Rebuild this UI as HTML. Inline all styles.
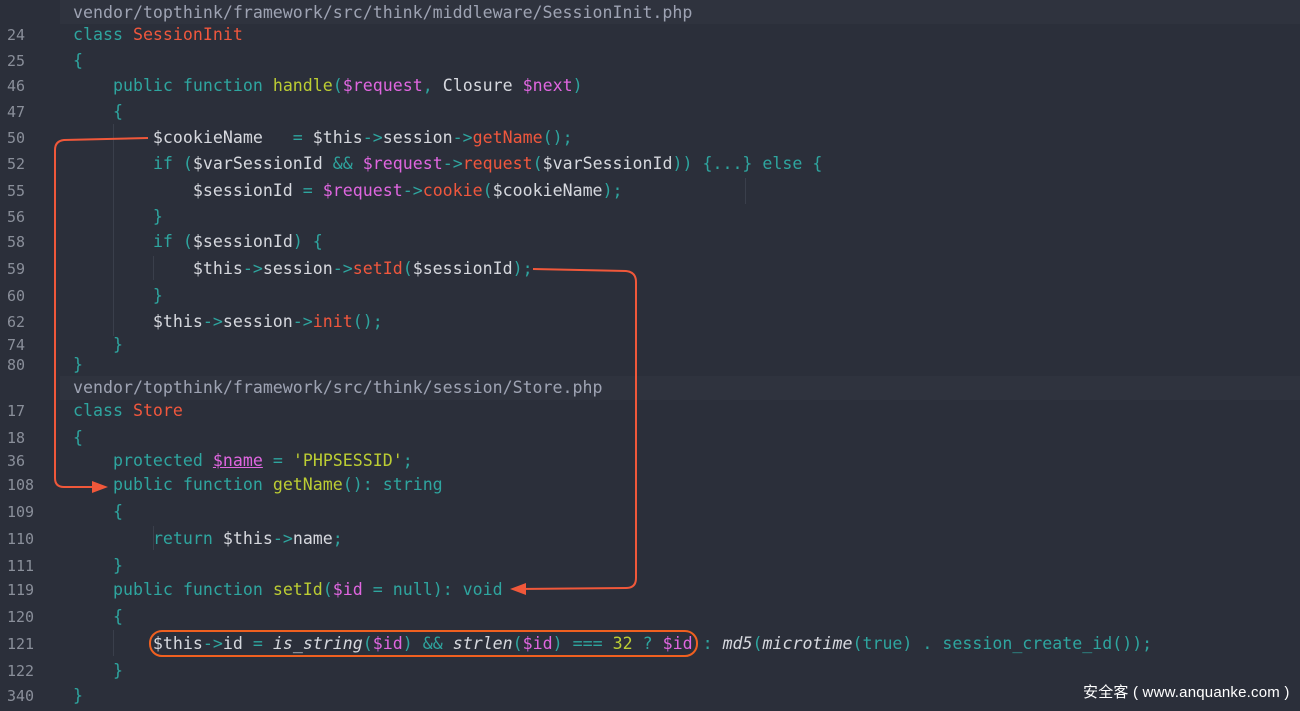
<!DOCTYPE html>
<html><head><meta charset="utf-8"><style>
body{margin:0;width:1300px;height:711px;background:#2b2f3a;overflow:hidden;position:relative;font-family:"DejaVu Sans Mono","Liberation Mono",monospace;font-size:16.6px;color:#d6d8de}
.l{position:absolute;left:0;height:22px;line-height:22px;white-space:pre;width:1300px;margin-top:1px}
.n{position:absolute;left:7px;color:#8a8f9a;font-size:15px}
.c{position:absolute;left:73px}
.k{color:#2ea59f}.o{color:#f0573d}.f{color:#bccd33}.v{color:#e066e0}.g{color:#9ea3b3}.y{color:#bccd33}.i{font-style:italic}
.hb{position:absolute;left:60px;width:1240px;height:24px;background:#2f333e}
.wm{position:absolute;left:1083px;top:681px;font-family:"Liberation Sans","Noto Sans CJK SC",sans-serif;font-size:15px;color:#fff;letter-spacing:0.2px}
.ig{position:absolute;width:1px;background:#3a3f4b}
</style></head><body>
<div class="hb" style="top:0"></div>
<div class="hb" style="top:376px"></div>
<div class="ig" style="left:113px;top:124px;height:212px"></div>
<div class="ig" style="left:153px;top:256px;height:24px"></div>
<div class="ig" style="left:153px;top:526px;height:24px"></div>
<div class="ig" style="left:113px;top:630px;height:26px"></div>
<div class="ig" style="left:745px;top:178px;height:26px"></div>

<div class="l" style="top:1px"><span class="c g">vendor/topthink/framework/src/think/middleware/SessionInit.php</span></div>
<div class="l" style="top:23px"><span class="n">24</span><span class="c"><span class="k">class</span> <span class="o">SessionInit</span></span></div>
<div class="l" style="top:49px"><span class="n">25</span><span class="c k">{</span></div>
<div class="l" style="top:74px"><span class="n">46</span><span class="c">    <span class="k">public function</span> <span class="f">handle</span><span class="k">(</span><span class="v">$request</span><span class="k">,</span> Closure <span class="v">$next</span><span class="k">)</span></span></div>
<div class="l" style="top:100px"><span class="n">47</span><span class="c k">    {</span></div>
<div class="l" style="top:126px"><span class="n">50</span><span class="c">        $cookieName   <span class="k">=</span> $this<span class="k">-&gt;</span>session<span class="k">-&gt;</span><span class="o">getName</span><span class="k">();</span></span></div>
<div class="l" style="top:152px"><span class="n">52</span><span class="c">        <span class="k">if (</span>$varSessionId <span class="k">&amp;&amp;</span> <span class="v">$request</span><span class="k">-&gt;</span><span class="o">request</span><span class="k">(</span>$varSessionId<span class="k">)) {...} else {</span></span></div>
<div class="l" style="top:179px"><span class="n">55</span><span class="c">            $sessionId <span class="k">=</span> <span class="v">$request</span><span class="k">-&gt;</span><span class="o">cookie</span><span class="k">(</span>$cookieName<span class="k">);</span></span></div>
<div class="l" style="top:205px"><span class="n">56</span><span class="c k">        }</span></div>
<div class="l" style="top:230px"><span class="n">58</span><span class="c">        <span class="k">if (</span>$sessionId<span class="k">) {</span></span></div>
<div class="l" style="top:257px"><span class="n">59</span><span class="c">            $this<span class="k">-&gt;</span>session<span class="k">-&gt;</span><span class="o">setId</span><span class="k">(</span>$sessionId<span class="k">);</span></span></div>
<div class="l" style="top:284px"><span class="n">60</span><span class="c k">        }</span></div>
<div class="l" style="top:310px"><span class="n">62</span><span class="c">        $this<span class="k">-&gt;</span>session<span class="k">-&gt;</span><span class="o">init</span><span class="k">();</span></span></div>
<div class="l" style="top:333px"><span class="n">74</span><span class="c k">    }</span></div>
<div class="l" style="top:353px"><span class="n">80</span><span class="c k">}</span></div>
<div class="l" style="top:376px"><span class="c g">vendor/topthink/framework/src/think/session/Store.php</span></div>
<div class="l" style="top:399px"><span class="n">17</span><span class="c"><span class="k">class</span> <span class="o">Store</span></span></div>
<div class="l" style="top:426px"><span class="n">18</span><span class="c k">{</span></div>
<div class="l" style="top:449px"><span class="n">36</span><span class="c">    <span class="k">protected</span> <span class="v" style="text-decoration:underline">$name</span> <span class="k">=</span> <span class="y">'PHPSESSID'</span><span class="k">;</span></span></div>
<div class="l" style="top:473px"><span class="n">108</span><span class="c">    <span class="k">public function</span> <span class="f">getName</span><span class="k">(): string</span></span></div>
<div class="l" style="top:500px"><span class="n">109</span><span class="c k">    {</span></div>
<div class="l" style="top:527px"><span class="n">110</span><span class="c">        <span class="k">return</span> $this<span class="k">-&gt;</span>name<span class="k">;</span></span></div>
<div class="l" style="top:554px"><span class="n">111</span><span class="c k">    }</span></div>
<div class="l" style="top:578px"><span class="n">119</span><span class="c">    <span class="k">public function</span> <span class="f">setId</span><span class="k">(</span><span class="v">$id</span> <span class="k">= null): void</span></span></div>
<div class="l" style="top:605px"><span class="n">120</span><span class="c k">    {</span></div>
<div class="l" style="top:632px"><span class="n">121</span><span class="c">        $this<span class="k">-&gt;</span>id <span class="k">=</span> <span class="i">is_string</span><span class="k">(</span><span class="v">$id</span><span class="k">) &amp;&amp;</span> <span class="i">strlen</span><span class="k">(</span><span class="v">$id</span><span class="k">) ===</span> <span class="y">32</span> <span class="k">?</span> <span class="v">$id</span><span class="k"> :</span> <span class="i">md5</span><span class="k">(</span><span class="i">microtime</span><span class="k">(true) . session_create_id());</span></span></div>
<div class="l" style="top:659px"><span class="n">122</span><span class="c k">    }</span></div>
<div class="l" style="top:684px"><span class="n">340</span><span class="c k">}</span></div>

<svg width="1300" height="711" style="position:absolute;left:0;top:0" fill="none" stroke="#f0583a" stroke-width="2">
<path d="M148 138 L64 140 Q55 141 55 150 L55 478 Q55 487 64 487 L100 487"/>
<path d="M92 481 L108 487 L92 493 Z" fill="#f0583a" stroke="none"/>
<path d="M533 269 L626 271 Q636 272 636 282 L636 578 Q636 588 626 588 L518 589"/>
<path d="M526 583 L510 589 L526 595 Z" fill="#f0583a" stroke="none"/>
<rect x="150" y="631" width="547" height="25" rx="12" stroke="#f06020"/>
</svg>
<div class="wm">安全客 ( www.anquanke.com )</div>
</body></html>
